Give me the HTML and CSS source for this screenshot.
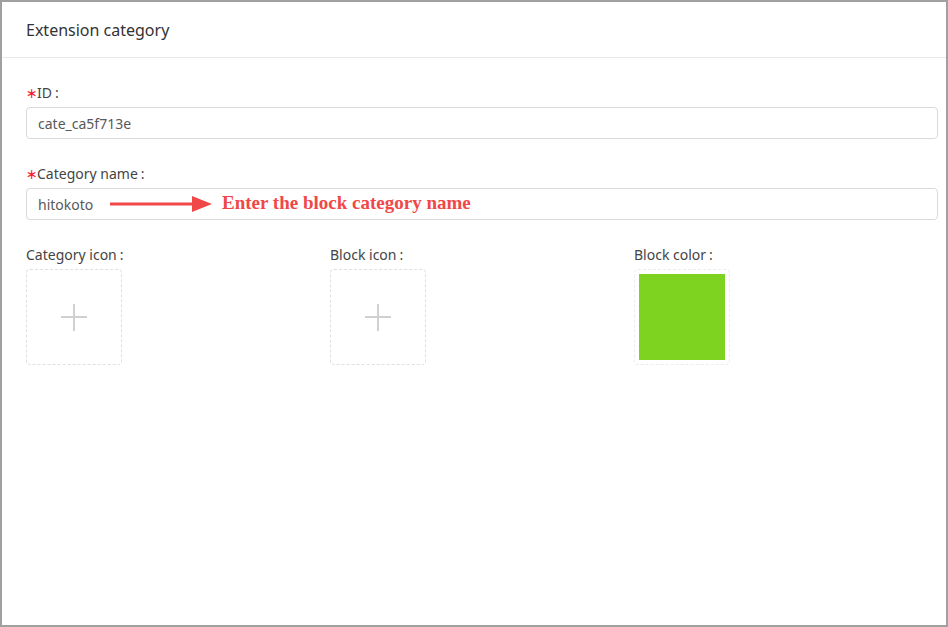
FILE: index.html
```html
<!DOCTYPE html>
<html>
<head>
<meta charset="utf-8">
<link rel="stylesheet" href="styles.css">
</head>
<body>
<div class="frame">
  <div class="header">Extension category</div>
  <div class="form">
    <div class="field">
      <div class="label"><span class="req">∗</span>ID<span class="colon">:</span></div>
      <div class="input">cate_ca5f713e</div>
    </div>
    <div class="field">
      <div class="label"><span class="req">∗</span>Category name<span class="colon">:</span></div>
      <div class="input">
        <span class="value">hitokoto</span>
        <svg class="arrow" width="102" height="18" viewBox="0 0 102 18">
          <line x1="0" y1="9" x2="84" y2="9" stroke="#f04848" stroke-width="3"/>
          <polygon points="82,1 102,9 82,17" fill="#f04848"/>
        </svg>
        <span class="note">Enter the block category name</span>
      </div>
    </div>
    <div class="cols">
      <div class="col">
        <div class="label">Category icon<span class="colon">:</span></div>
        <div class="upload">
          <svg width="26" height="28" viewBox="0 0 26 28"><path d="M13 1v27M0 14h26" stroke="#d0d0d0" stroke-width="2"/></svg>
        </div>
      </div>
      <div class="col">
        <div class="label">Block icon<span class="colon">:</span></div>
        <div class="upload">
          <svg width="26" height="28" viewBox="0 0 26 28"><path d="M13 1v27M0 14h26" stroke="#d0d0d0" stroke-width="2"/></svg>
        </div>
      </div>
      <div class="col">
        <div class="label">Block color<span class="colon">:</span></div>
        <div class="upload color-box"><div class="swatch"></div></div>
      </div>
    </div>
  </div>
</div>
</body>
</html>
```
FILE: styles.css
```css
* { box-sizing: border-box; }
html, body { margin: 0; padding: 0; background: #fff; }
body { font-family: "Noto Sans", "Open Sans", sans-serif; color: #333; }
.frame {
  width: 948px; height: 627px;
  border: 2px solid #a0a0a0;
  background: #fff;
}
.header {
  height: 56px;
  border-bottom: 1px solid #e8e8e8;
  padding-left: 24px;
  font-size: 16px;
  line-height: 56px;
  color: #333;
}
.form { padding: 25px 8px 0 24px; }
.field { margin-bottom: 25px; }
.label {
  font-size: 14px; line-height: 20px; height: 20px;
  color: #444; margin-bottom: 4px;
  display: flex; align-items: center;
}
.req { color: #f5222d; font-family: "DejaVu Sans", sans-serif; font-size: 14px; width: 11px; }
.colon { margin-left: 3px; }
.input {
  height: 32px;
  border: 1px solid #d9d9d9;
  border-radius: 4px;
  padding: 0 11px;
  font-size: 14px;
  color: #595959;
  display: flex; align-items: center;
}
.value { width: 72px; }
.arrow { margin-right: 10px; }
.note {
  font-family: "Liberation Serif", serif;
  font-weight: bold;
  font-size: 19px;
  color: #f04848;
  padding-bottom: 3px;
}
.cols { display: grid; grid-template-columns: 1fr 1fr 1fr; }
.upload {
  width: 96px; height: 96px;
  border: 1px dashed #e0e0e0;
  border-radius: 4px;
  display: flex; align-items: center; justify-content: center;
}
.color-box { padding: 4px; border-color: #ececec; }
.swatch { width: 86px; height: 86px; background: #7ed321; }
```
